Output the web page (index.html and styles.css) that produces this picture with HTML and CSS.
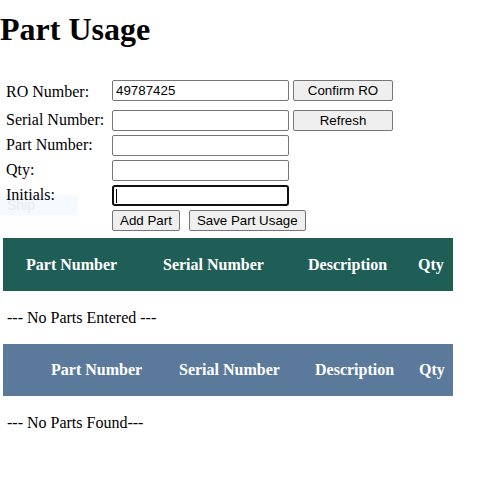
FILE: index.html
```html
<!DOCTYPE html>
<html>
<head>
<meta charset="utf-8">
<link rel="stylesheet" href="styles.css">
</head>
<body>
<div class="page">
  <h1 class="title">Part Usage</h1>
  <div class="ghost">Ship</div>
  <form class="form">
    <label class="lbl lbl-first">RO Number:</label>
    <input class="field" type="text" value="49787425">
    <button class="btn btn-wide" type="button">Confirm RO</button>

    <label class="lbl">Serial Number:</label>
    <input class="field" type="text">
    <button class="btn btn-wide" type="button">Refresh</button>

    <label class="lbl">Part Number:</label>
    <input class="field" type="text">
    <span></span>

    <label class="lbl">Qty:</label>
    <input class="field" type="text">
    <span></span>

    <label class="lbl">Initials:</label>
    <span class="focus-wrap"><input class="field field-focus" type="text"><span class="caret"></span></span>
    <span></span>

    <span></span>
    <div class="actions">
      <button class="btn" type="button">Add Part</button>
      <button class="btn" type="button">Save Part Usage</button>
    </div>
  </form>

  <div class="thead thead-green">
    <span>Part Number</span>
    <span>Serial Number</span>
    <span>Description</span>
    <span>Qty</span>
  </div>
  <p class="empty empty-first">--- No Parts Entered ---</p>

  <div class="thead thead-blue">
    <span>Part Number</span>
    <span>Serial Number</span>
    <span>Description</span>
    <span>Qty</span>
  </div>
  <p class="empty">--- No Parts Found---</p>
</div>
</body>
</html>
```

FILE: styles.css
```css
html, body {
  margin: 0;
  padding: 0;
  background: #fff;
}
body {
  font-family: "Liberation Serif", "Times New Roman", serif;
  font-size: 16px;
  color: #000;
}
.page {
  position: relative;
}
.title {
  font-size: 32px;
  font-weight: bold;
  margin: 11px 0 0 0;
  line-height: 37px;
}
.ghost {
  position: absolute;
  left: 0;
  top: 184px;
  width: 71px;
  height: 20px;
  padding-left: 7px;
  background: #f4fafe;
  color: #e8ebee;
  font-family: "Liberation Sans", Arial, sans-serif;
  font-size: 14px;
  line-height: 20px;
  z-index: 0;
}
.form {
  position: relative;
  z-index: 1;
  display: grid;
  grid-template-columns: 102px 177px 100px;
  column-gap: 4px;
  grid-template-rows: 30px 25px 25px 25px 25px 21px;
  align-items: start;
  margin: 32px 0 0 6px;
}
.lbl {
  line-height: 18px;
  padding-top: 1px;
}
.lbl-first {
  padding-top: 3px;
}
.field {
  box-sizing: border-box;
  width: 177px;
  height: 21px;
  margin: 0;
  padding: 1px 3px;
  border: 1px solid #767676;
  border-radius: 2px;
  font-family: "Liberation Sans", Arial, sans-serif;
  font-size: 13.333px;
  color: #000;
  background: #fff;
  outline: none;
}
.focus-wrap {
  position: relative;
  display: block;
  width: 177px;
  height: 21px;
}
.field-focus {
  border: 2px solid #101010;
  border-radius: 3px;
}
.caret {
  position: absolute;
  left: 4px;
  top: 4px;
  width: 1px;
  height: 14px;
  background: #000;
}
.btn {
  box-sizing: border-box;
  height: 21px;
  margin: 0;
  padding: 1px 7px;
  border: 1px solid #767676;
  border-radius: 2px;
  background: #efefef;
  font-family: "Liberation Sans", Arial, sans-serif;
  font-size: 13.333px;
  color: #000;
  line-height: 17px;
  white-space: nowrap;
}
.btn-wide {
  width: 100px;
}
.actions {
  grid-column: 2 / 4;
  display: flex;
  gap: 9px;
}
.thead {
  display: grid;
  width: 450px;
  height: 53px;
  margin-left: 3px;
  align-items: center;
  color: #fff;
  font-weight: bold;
  white-space: nowrap;
  box-sizing: border-box;
}
.thead-green {
  margin-top: 7px;
  background: #1f5e56;
  grid-template-columns: 137px 145px 110px 1fr;
  padding-left: 23px;
}
.thead-blue {
  margin-top: 0;
  background: #5b7a9b;
  grid-template-columns: 128px 136px 104px 1fr;
  padding-left: 48px;
  height: 52px;
}
.empty {
  margin: 18px 0 18px 7px;
  line-height: 18px;
}
.empty-first {
  margin-bottom: 17px;
}
```
